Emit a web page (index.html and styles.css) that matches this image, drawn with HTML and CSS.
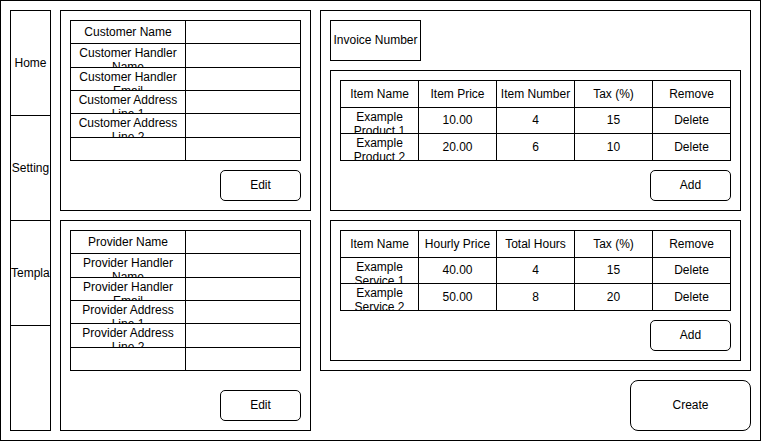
FILE: index.html
```html
<!DOCTYPE html>
<html lang="en">
<head>
  <meta charset="UTF-8">
  <title>Invoice Generator</title>
  <link rel="stylesheet" href="styles.css">
</head>
<body>

  <div class="app">

    <div class="sidebar">
      <div class="nav-item"><span>Home</span></div>
      <div class="nav-item"><span>Setting</span></div>
      <div class="nav-item"><span>Templates</span></div>
      <div class="nav-item"></div>
    </div>

    <div class="parties">
      <div class="panel customer">
        <div class="info-table">
          <div class="cell">Customer Name</div><div class="cell"></div>
          <div class="cell">Customer Handler Name</div><div class="cell"></div>
          <div class="cell">Customer Handler Email</div><div class="cell"></div>
          <div class="cell">Customer Address Line 1</div><div class="cell"></div>
          <div class="cell">Customer Address Line 2</div><div class="cell"></div>
          <div class="cell"></div><div class="cell"></div>
        </div>
        <button class="btn">Edit</button>
      </div>

      <div class="panel provider">
        <div class="info-table">
          <div class="cell">Provider Name</div><div class="cell"></div>
          <div class="cell">Provider Handler Name</div><div class="cell"></div>
          <div class="cell">Provider Handler Email</div><div class="cell"></div>
          <div class="cell">Provider Address Line 1</div><div class="cell"></div>
          <div class="cell">Provider Address Line 2</div><div class="cell"></div>
          <div class="cell"></div><div class="cell"></div>
        </div>
        <button class="btn push-down">Edit</button>
      </div>
    </div>

    <div class="invoice-col">
      <div class="panel invoice">
        <div class="invoice-number">Invoice Number</div>

        <div class="panel items">
          <div class="items-table">
            <div class="cell">Item Name</div>
            <div class="cell">Item Price</div>
            <div class="cell">Item Number</div>
            <div class="cell">Tax (%)</div>
            <div class="cell">Remove</div>

            <div class="cell">Example Product 1</div>
            <div class="cell">10.00</div>
            <div class="cell">4</div>
            <div class="cell">15</div>
            <div class="cell">Delete</div>

            <div class="cell">Example Product 2</div>
            <div class="cell">20.00</div>
            <div class="cell">6</div>
            <div class="cell">10</div>
            <div class="cell">Delete</div>
          </div>
          <button class="btn">Add</button>
        </div>

        <div class="panel items">
          <div class="items-table">
            <div class="cell">Item Name</div>
            <div class="cell">Hourly Price</div>
            <div class="cell">Total Hours</div>
            <div class="cell">Tax (%)</div>
            <div class="cell">Remove</div>

            <div class="cell">Example Service 1</div>
            <div class="cell">40.00</div>
            <div class="cell">4</div>
            <div class="cell">15</div>
            <div class="cell">Delete</div>

            <div class="cell">Example Service 2</div>
            <div class="cell">50.00</div>
            <div class="cell">8</div>
            <div class="cell">20</div>
            <div class="cell">Delete</div>
          </div>
          <button class="btn">Add</button>
        </div>
      </div>

      <button class="btn create">Create</button>
    </div>

  </div>

</body>
</html>
```

FILE: styles.css
```css
* {
  box-sizing: border-box;
}

body {
  font-family: 'Liberation Sans', Arial, sans-serif;
  font-size: 12px;
  line-height: 14px;
  color: #000;
  background-color: #fff;
  margin: 0;
  padding: 0;
}

.app {
  display: grid;
  grid-template-columns: 41px 251px 431px;
  gap: 9px;
  width: 761px;
  height: 441px;
  padding: 9px;
  border: 1px solid #000;
}

/* sidebar */
.sidebar {
  display: flex;
  flex-direction: column;
  border: 1px solid #000;
}

.nav-item {
  display: flex;
  justify-content: safe center;
  align-items: center;
  height: 105px;
  overflow: hidden;
  white-space: nowrap;
  border-bottom: 1px solid #000;
}

.nav-item:last-child {
  flex: 1;
  border-bottom: none;
}

/* panels */
.panel {
  display: flex;
  flex-direction: column;
  padding: 9px;
  border: 1px solid #000;
}

.parties {
  display: flex;
  flex-direction: column;
  gap: 9px;
}

.customer {
  height: 201px;
}

.provider {
  flex: 1;
}

.invoice-col {
  display: flex;
  flex-direction: column;
  gap: 9px;
}

.invoice {
  height: 361px;
  gap: 9px;
}

.items {
  height: 141px;
}

.invoice-number {
  display: flex;
  align-items: center;
  justify-content: center;
  width: 91px;
  height: 41px;
  padding-bottom: 2px;
  border: 1px solid #000;
}

/* tables */
.info-table,
.items-table {
  display: grid;
  gap: 1px;
  background-color: #000;
  border: 1px solid #000;
}

.info-table {
  grid-template-columns: repeat(2, minmax(0, 1fr));
  grid-template-rows: repeat(6, minmax(0, 1fr));
  height: 141px;
}

.items-table {
  grid-template-columns: repeat(5, minmax(0, 1fr));
  grid-template-rows: repeat(3, minmax(0, 1fr));
  height: 81px;
}

.cell {
  display: flex;
  flex-direction: column;
  justify-content: safe center;
  padding: 2px;
  overflow: hidden;
  text-align: center;
  background-color: #fff;
}

/* buttons */
.btn {
  align-self: flex-end;
  width: 81px;
  height: 31px;
  margin-top: 9px;
  padding: 0 0 2px;
  font-family: inherit;
  font-size: 12px;
  color: #000;
  background-color: #fff;
  border: 1px solid #000;
  border-radius: 5px;
}

.push-down {
  margin-top: auto;
}

.create {
  width: 121px;
  height: 51px;
  margin-top: 0;
  border-radius: 8px;
}
```
